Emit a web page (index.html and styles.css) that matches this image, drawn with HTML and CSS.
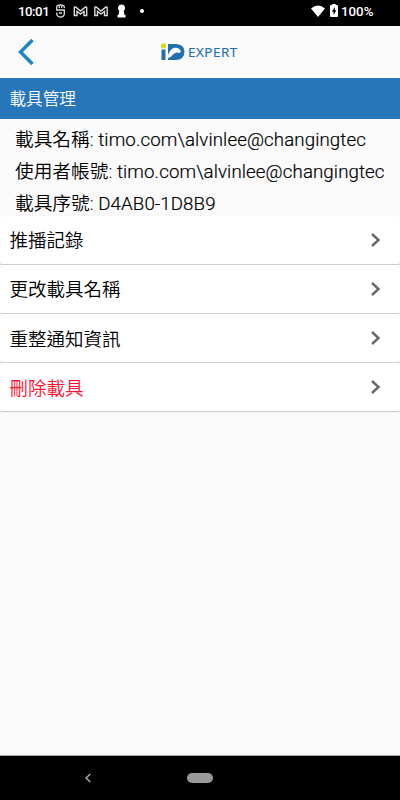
FILE: index.html
```html
<!DOCTYPE html>
<html lang="zh-Hant">
<head>
<meta charset="utf-8">
<meta name="viewport" content="width=device-width, initial-scale=1">
<title>載具管理</title>
<link rel="stylesheet" href="styles.css">
</head>
<body>
<div class="screen">
  <div class="status">
    <span class="clock">10:01</span>
    <svg class="notices" width="92" height="16" viewBox="0 0 92 16" fill="none" stroke="#ddd">
      <path d="M9.300 5V4Q9.300 2 5.500 2T1.700 4V7H9.300V10.500Q9.300 14 5.500 14T1.700 10.500V9.500M4.300 2.500V5M6.700 2.500V5M4 10H7" stroke-width="1.300"/>
      <path id="mail" d="M19.300 12.500V4.800Q19.300 3.300 20.800 4.200L25.500 8L30.200 4.200Q31.700 3.300 31.700 4.800V12.500H29V8.300L25.500 11L22 8.300V12.500Z" stroke-width="1.400"/>
      <use href="#mail" x="20.500"/>
      <path d="M66.500 1.500a3.500 3.500 0 0 1 2.300 6.200L69.500 12H70.500V14.500H62.500V12H63.500L64.200 7.700A3.500 3.500 0 0 1 66.500 1.500Z" fill="#fff" stroke="none"/>
      <circle cx="87" cy="8" r="2" fill="#fff" stroke="none"/>
    </svg>
    <svg class="signals" width="30" height="14" viewBox="0 0 30 14">
      <path d="M1 4.500Q8 -1.500 15 4.500L8 13Z" fill="#fff"/>
      <path d="M22.300 1V0H25.700V1H27Q28 1 28 2V12Q28 13 27 13H21Q20 13 20 12V2Q20 1 21 1Z" fill="#fff"/>
      <path d="M24.800 3L21.800 7.700H23.600V11L26.300 6.300H24.800Z" fill="#000"/>
    </svg>
    <span class="percent">100%</span>
  </div>
  <header class="header">
    <svg class="back" width="18" height="28" viewBox="0 0 18 28"><path d="M15.500 2L3.500 14L15.500 26" fill="none" stroke="#1e86c4" stroke-width="3.500"/></svg>
    <div class="logo">
      <svg width="25" height="18" viewBox="0 0 25 18">
        <circle cx="3.500" cy="2.800" r="2.600" fill="#d0dc1c"/>
        <path d="M1.500 6.500H5.500V17H1.500Z" fill="#216fae"/>
        <path d="M8 1H16Q24.500 1.500 24.500 8.500Q24.500 17 15.500 17H8Z" fill="#216fae"/>
        <path d="M8 12.500Q9.500 6.500 14.500 4.800Q19.500 4 21 8.500L19.500 10L16.500 9.500Q13 10.500 11.500 13.200Q10.500 14.500 8 15Z" fill="#fafafa"/>
      </svg>
      <span>EXPERT</span>
    </div>
  </header>
  <h1 class="title">載具管理</h1>
  <section class="info">
    <p>載具名稱: <span>timo.com\alvinlee@changingtec</span></p>
    <p>使用者帳號: <span>timo.com\alvinlee@changingtec</span></p>
    <p>載具序號: <span>D4AB0-1D8B9</span></p>
  </section>
  <nav class="menu">
    <a class="item">推播記錄<svg width="12" height="16" viewBox="0 0 12 16"><path d="M2 2L8.500 8L2 14"/></svg></a>
    <a class="item">更改載具名稱<svg width="12" height="16" viewBox="0 0 12 16"><path d="M2 2L8.500 8L2 14"/></svg></a>
    <a class="item">重整通知資訊<svg width="12" height="16" viewBox="0 0 12 16"><path d="M2 2L8.500 8L2 14"/></svg></a>
    <a class="item danger">刪除載具<svg width="12" height="16" viewBox="0 0 12 16"><path d="M2 2L8.500 8L2 14"/></svg></a>
  </nav>
  <footer class="navbar">
    <svg width="8" height="12" viewBox="0 0 8 12"><path d="M6.300 2L2 6L6.300 10" fill="none" stroke="#aaa" stroke-width="1.500"/></svg>
    <span class="home"></span>
  </footer>
</div>
</body>
</html>
```
FILE: styles.css
```css
* { box-sizing: border-box; }
body {
  margin: 0;
  font-family: Roboto, "Noto Sans CJK TC", sans-serif;
  background: #fafafa;
  color: #000;
}
.screen {
  width: 400px;
  height: 800px;
  display: flex;
  flex-direction: column;
  overflow: hidden;
}
.status {
  height: 26px;
  flex: none;
  padding: 0 24px 4px 18px;
  display: flex;
  align-items: center;
  background: #000;
  color: #fff;
  font-size: 13.300px;
  font-weight: 500;
}
.clock { width: 37px; letter-spacing: -0.500px; }
.signals { margin-left: auto; margin-right: 1px; }
.percent { width: 35px; }
.header {
  height: 52px;
  flex: none;
  display: grid;
  grid-template-columns: 160px 1fr;
  align-items: center;
}
.back { margin-left: 17px; }
.logo {
  display: flex;
  align-items: center;
  gap: 3px;
  color: #2470ad;
  font: 500 13.500px/18px "Open Sans", sans-serif;
  letter-spacing: 0.500px;
  -webkit-text-stroke: 0.200px #2470ad;
}
.title {
  height: 41px;
  flex: none;
  margin: 0;
  padding-left: 9.500px;
  background: #2676b9;
  color: #fff;
  font-size: 16.600px;
  font-weight: 350;
  line-height: 43px;
}
.info {
  height: 96.500px;
  flex: none;
  padding: 5px 0 0 15px;
  font-size: 18.700px;
  font-weight: 350;
  line-height: 32.200px;
  white-space: nowrap;
}
.info p { height: 32.200px; margin: 0; }
.info span { letter-spacing: 0.100px; -webkit-text-stroke: 0.200px #000; }
.menu { flex: none; }
.item {
  height: 48px;
  margin-bottom: 1.300px;
  padding: 0 18px 1px 9.500px;
  display: flex;
  align-items: center;
  justify-content: space-between;
  background: #fff;
  border-radius: 2px;
  box-shadow: 0 1px 1px #c8c8c8, 0 0 1px #ddd;
  font-size: 18.500px;
  font-weight: 350;
}
.item svg { margin-top: 1px; }
.item path { fill: none; stroke: #686868; stroke-width: 2.400; }
.danger { color: #ff0f2f; }
.navbar {
  height: 45px;
  flex: none;
  margin-top: auto;
  padding-left: 84px;
  display: flex;
  align-items: center;
  gap: 95px;
  background: #000;
  border-top: 1px solid #a6aaa6;
}
.home { width: 26px; height: 10px; border-radius: 5px; background: #999; }
```
